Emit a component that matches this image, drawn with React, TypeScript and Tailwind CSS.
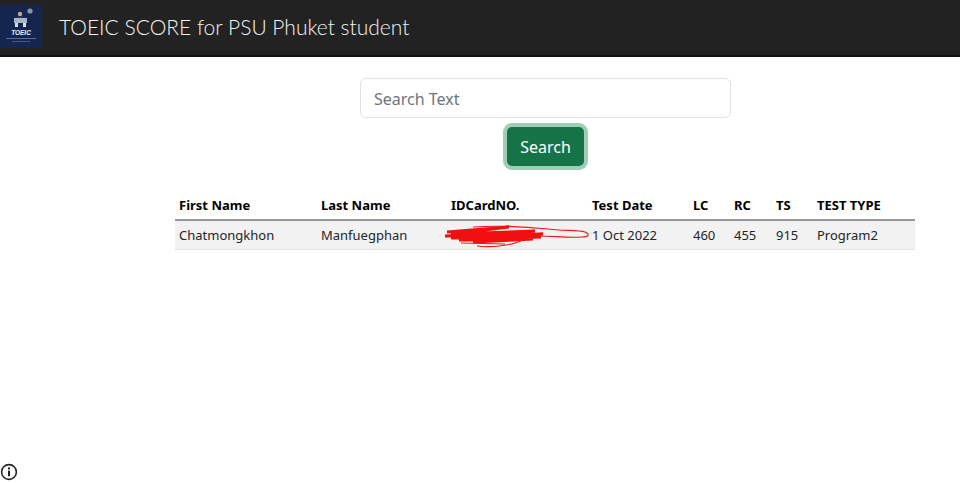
import React from "react";

const uiFont = "font-['Noto_Sans','Open_Sans',sans-serif]";

const cols = [
  { label: "First Name", value: "Chatmongkhon", w: "w-[142px]" },
  { label: "Last Name", value: "Manfuegphan", w: "w-[130px]" },
  { label: "IDCardNO.", value: "", w: "w-[141px]" },
  { label: "Test Date", value: "1 Oct 2022", w: "w-[101px]" },
  { label: "LC", value: "460", w: "w-[41px]" },
  { label: "RC", value: "455", w: "w-[42px]" },
  { label: "TS", value: "915", w: "w-[41px]" },
  { label: "TEST TYPE", value: "Program2", w: "w-[102px]" },
];

function Logo() {
  return (
    <svg width="42" height="43" viewBox="0 0 42 43" className="block">
      <rect width="42" height="43" fill="#14264f" />
      <circle cx="30" cy="6" r="2.6" fill="#8a93a8" />
      <circle cx="20" cy="9" r="2.2" fill="#c9a48e" />
      <rect x="17" y="11" width="6" height="6" fill="#2b3552" />
      <rect x="14" y="13" width="13" height="5" fill="#aab4c8" />
      <rect x="15" y="18" width="3" height="4" fill="#d8dde8" />
      <rect x="23" y="18" width="3" height="4" fill="#d8dde8" />
      <text x="21" y="30" textAnchor="middle" fontSize="6.5" fontWeight="700" fontStyle="italic" fontFamily="Liberation Sans, sans-serif" fill="#eef1f7">
        TOEIC
      </text>
      <rect x="6" y="33" width="30" height="1" fill="#5a6b94" />
      <rect x="12" y="36" width="18" height="1" fill="#4a5a84" />
    </svg>
  );
}

function Scribble() {
  return (
    <svg width="150" height="28" viewBox="0 0 150 28" className="absolute left-[-8px] top-[-2px]">
      <path d="M30 6 C60 4 85 6 105 8 C120 10 135 9 142 11 C147 13 146 16 139 16 C125 17 110 15 96 15" fill="none" stroke="#ef1a1a" strokeWidth="1.2" />
      <path d="M4 11 L66 6 L8 13 L92 10 L2 15 L100 13 L8 17 L98 16 L16 19 L90 18 L30 21 L72 19" fill="none" stroke="#f01010" strokeWidth="3" />
      <path d="M34 25 C50 27 68 24 78 20 M18 22 L62 23" fill="none" stroke="#ef1a1a" strokeWidth="1.1" />
    </svg>
  );
}

export default function App() {
  return (
    <div className={`relative h-[483px] w-[960px] overflow-hidden bg-white ${uiFont}`}>
      <header className="flex h-[57px] items-center border-b-2 border-[#111] bg-[#222222] pb-[2px]">
        <Logo />
        <h1 className="ml-[17px] font-['Lato',sans-serif] text-[21px] font-light text-[#f2f2f2]">
          TOEIC SCORE for PSU Phuket student
        </h1>
      </header>

      <main className="flex flex-col items-center pt-[21px]">
        <div className="ml-[131px] flex w-[371px] flex-col items-center">
          <input
            placeholder="Search Text"
            readOnly
            className="h-[40px] w-full rounded-[6px] border border-[#dee2e6] bg-white px-[13px] pt-[1px] text-[16px] outline-none placeholder:text-[#6c757d]"
          />
          <button className="mt-[9px] h-[39px] w-[77px] rounded-[5px] bg-[#157347] text-[16px] text-white shadow-[0_0_0_4px_#9fcdb6]">
            Search
          </button>
        </div>

        <table className="mt-[28px] ml-[130px] w-[740px] table-fixed border-collapse text-[13px] text-[#212529]">
          <thead>
            <tr className="h-[26px] border-b-2 border-[#999]">
              {cols.map((c) => (
                <th key={c.label} className={`${c.w} px-[4px] pb-[2px] text-left font-bold text-black`}>
                  {c.label}
                </th>
              ))}
            </tr>
          </thead>
          <tbody>
            <tr className="h-[29px] border-b border-[#e3e3e3] bg-[#f2f2f2]">
              {cols.map((c) => (
                <td key={c.label} className="px-[4px] pt-[2px]">
                  {c.label === "IDCardNO." ? (
                    <span className="relative -mt-[2px] block h-[24px]">
                      <Scribble />
                    </span>
                  ) : (
                    c.value
                  )}
                </td>
              ))}
            </tr>
          </tbody>
        </table>
      </main>

      <svg width="18" height="18" viewBox="0 0 18 18" className="absolute bottom-[2px] left-0">
        <circle cx="9" cy="9" r="7.4" fill="none" stroke="#222" strokeWidth="1.6" />
        <rect x="8" y="7.6" width="2" height="5.6" fill="#222" />
        <rect x="8" y="4.4" width="2" height="2" fill="#222" />
      </svg>
    </div>
  );
}
